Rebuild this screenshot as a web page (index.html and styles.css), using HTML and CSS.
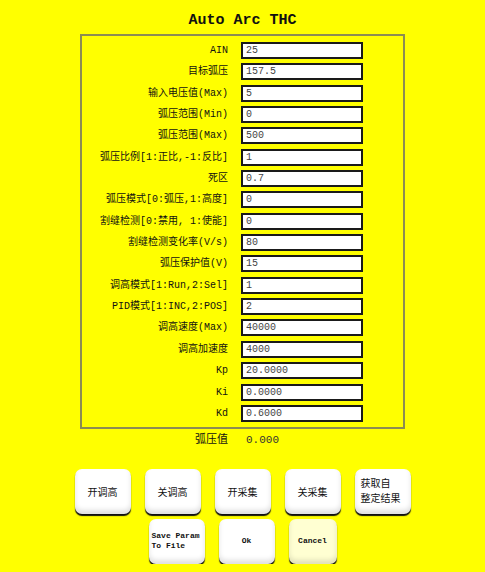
FILE: index.html
```html
<!DOCTYPE html>
<html lang="zh-CN">
<head>
    <meta charset="UTF-8">
    <meta name="viewport" content="width=device-width, initial-scale=1.0">
    <title>Auto Arc THC</title>
    <link rel="stylesheet" href="styles.css">
</head>
<body>

<h1 class="title">Auto Arc THC</h1>

<div class="param-box">
    <label class="param-label">AIN</label><input class="param-input" value="25">
    <label class="param-label">目标弧压</label><input class="param-input" value="157.5">
    <label class="param-label">输入电压值(Max)</label><input class="param-input" value="5">
    <label class="param-label">弧压范围(Min)</label><input class="param-input" value="0">
    <label class="param-label">弧压范围(Max)</label><input class="param-input" value="500">
    <label class="param-label">弧压比例[1:正比,-1:反比]</label><input class="param-input" value="1">
    <label class="param-label">死区</label><input class="param-input" value="0.7">
    <label class="param-label">弧压模式[0:弧压,1:高度]</label><input class="param-input" value="0">
    <label class="param-label">割缝检测[0:禁用, 1:使能]</label><input class="param-input" value="0">
    <label class="param-label">割缝检测变化率(V/s)</label><input class="param-input" value="80">
    <label class="param-label">弧压保护值(V)</label><input class="param-input" value="15">
    <label class="param-label">调高模式[1:Run,2:Sel]</label><input class="param-input" value="1">
    <label class="param-label">PID模式[1:INC,2:POS]</label><input class="param-input" value="2">
    <label class="param-label">调高速度(Max)</label><input class="param-input" value="40000">
    <label class="param-label">调高加速度</label><input class="param-input" value="4000">
    <label class="param-label">Kp</label><input class="param-input" value="20.0000">
    <label class="param-label">Ki</label><input class="param-input" value="0.0000">
    <label class="param-label">Kd</label><input class="param-input" value="0.6000">
</div>

<div class="arc-value">
    <span class="arc-label">弧压值</span>
    <span class="arc-number">0.000</span>
</div>

<div class="button-row button-row-top">
    <button class="btn">开调高</button>
    <button class="btn">关调高</button>
    <button class="btn">开采集</button>
    <button class="btn">关采集</button>
    <button class="btn btn-left btn-two">获取自<br>整定结果</button>
</div>
<div class="button-row">
    <button class="btn btn-mono btn-left">Save Param<br>To File</button>
    <button class="btn btn-mono">Ok</button>
    <button class="btn btn-mono btn-cancel">Cancel</button>
</div>

</body>
</html>
```

FILE: styles.css
```css
body {
    margin: 0;
    padding: 0;
    background-color: #ffff00;
    color: #111;
    font-family: "Liberation Mono", "Noto Sans CJK SC", monospace;
}

.title {
    margin: 0;
    padding-top: 12px;
    height: 22px;
    line-height: 18px;
    font-size: 15px;
    font-weight: bold;
    text-align: center;
}

.param-box {
    box-sizing: border-box;
    width: 325px;
    margin: 0 0 0 80px;
    border: 2px solid #8c8c52;
    padding: 6px 0 5px 0;
    display: grid;
    grid-template-columns: 146px 122px;
    column-gap: 13px;
    row-gap: 4.35px;
    align-items: center;
}

.param-label {
    font-size: 10px;
    line-height: 17px;
    text-align: right;
    white-space: nowrap;
}

.param-input {
    box-sizing: border-box;
    width: 122px;
    height: 17px;
    margin: 0;
    border: 2px solid #1a1a1a;
    padding: 0 3px;
    background: #fff;
    color: #444;
    font-family: "Liberation Mono", monospace;
    font-size: 10px;
    outline: none;
}

.arc-value {
    display: grid;
    grid-template-columns: 146px 150px;
    column-gap: 18px;
    margin: 3px 0 0 82px;
    height: 16px;
    line-height: 16px;
    font-size: 11px;
}

.arc-label {
    text-align: right;
}

.arc-number {
    color: #333;
}

.button-row {
    display: flex;
    justify-content: center;
    gap: 14px;
    margin-top: 5px;
}

.button-row-top {
    margin-top: 21px;
}

.btn {
    box-sizing: border-box;
    width: 56px;
    height: 45px;
    border: none;
    border-radius: 7px;
    background: #fff;
    color: #111;
    font-family: "Noto Sans CJK SC", sans-serif;
    font-size: 10px;
    line-height: 11px;
    padding: 0 4px;
    box-shadow: 0 2px 1px #111, inset 0 -4px 5px rgba(0, 0, 0, 0.12);
}

.btn-left {
    text-align: left;
}

.btn-two {
    line-height: 15px;
    padding: 0 4px 2px 6px;
}

.btn-mono {
    font-family: "Liberation Mono", monospace;
    font-size: 8px;
    line-height: 10px;
    font-weight: bold;
    padding: 0 3px;
}

.btn-cancel {
    width: 48px;
    background: #ffffd2;
}
```
